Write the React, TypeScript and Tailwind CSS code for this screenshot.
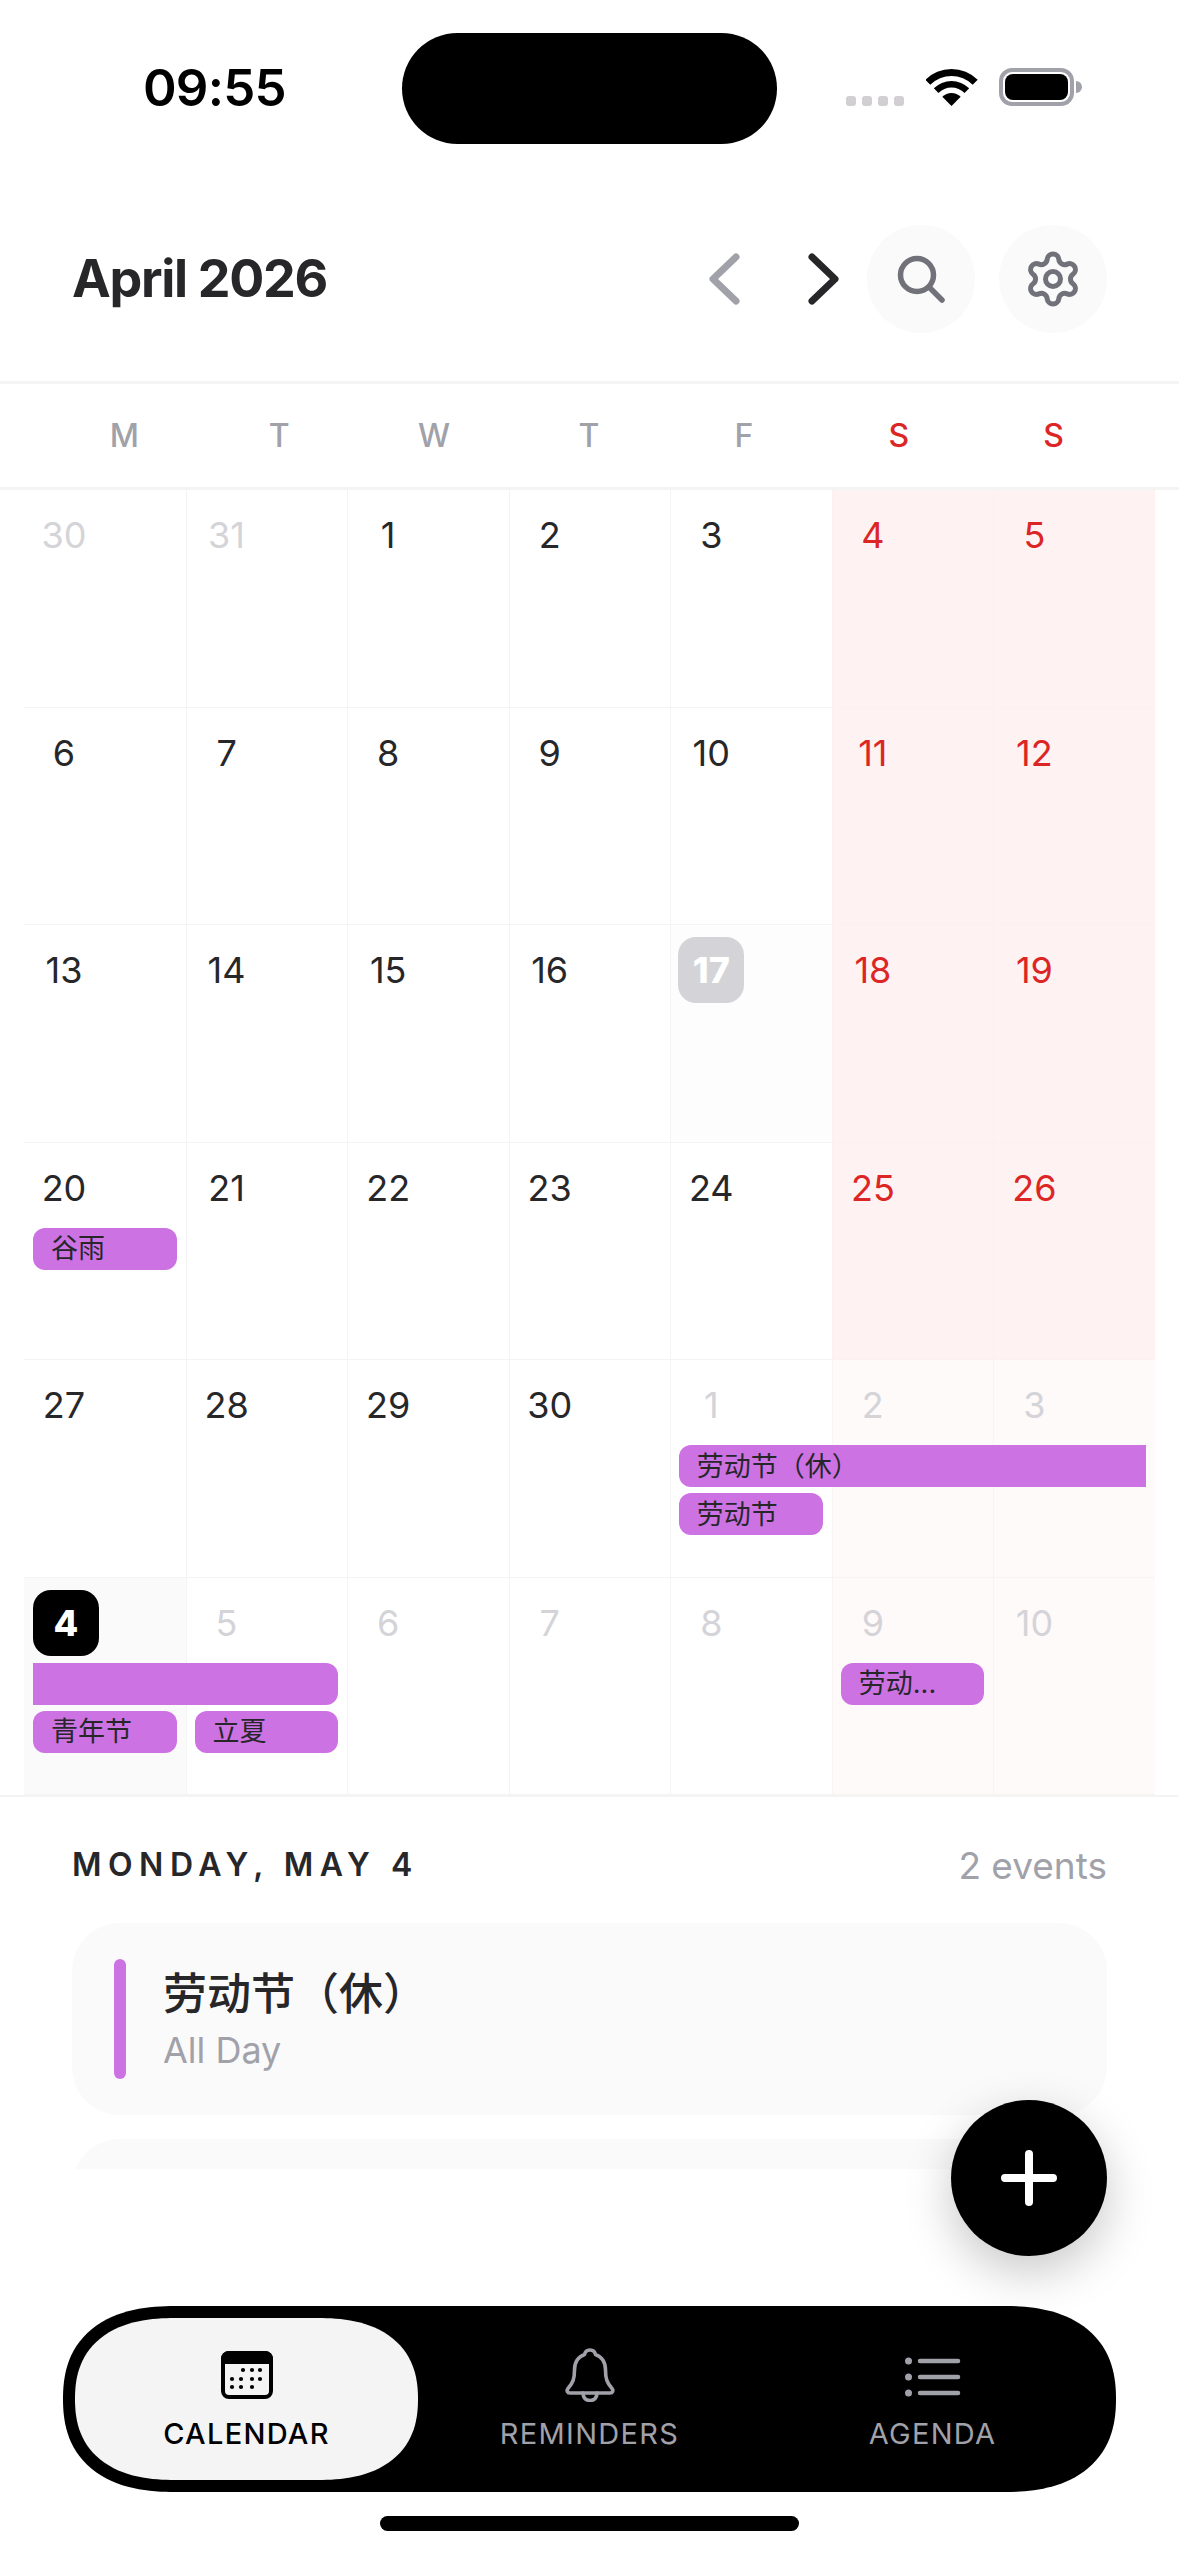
import React from "react";
import { Settings } from "lucide-react";

type Ev = { text?: string; cls: string };
type Cell = { d: number; kind: "in" | "out" | "wkn" | "wko" | "sel17" | "sel4" };

const sans = "[font-family:Inter,'Noto_Sans_CJK_SC',sans-serif]";

const mk = (nums: number[], outs: number[] = []): Cell[] =>
  nums.map((d, i) => {
    const out = outs.includes(i);
    const we = i >= 5;
    return { d, kind: we ? (out ? "wko" : "wkn") : out ? "out" : "in" };
  });

const weeks: { cells: Cell[]; events: Ev[] }[] = [
  { cells: mk([30, 31, 1, 2, 3, 4, 5], [0, 1]), events: [] },
  { cells: mk([6, 7, 8, 9, 10, 11, 12]), events: [] },
  {
    cells: mk([13, 14, 15, 16, 17, 18, 19]).map((c) => (c.d === 17 ? { ...c, kind: "sel17" as const } : c)),
    events: [],
  },
  {
    cells: mk([20, 21, 22, 23, 24, 25, 26]),
    events: [{ text: "谷雨", cls: "col-start-1 col-span-1 row-start-2 ml-[9px] mr-[9px] rounded-[12px]" }],
  },
  {
    cells: mk([27, 28, 29, 30, 1, 2, 3], [4, 5, 6]),
    events: [
      { text: "劳动节（休）", cls: "col-start-5 col-span-3 row-start-2 ml-[8.5px] mr-[9px] rounded-l-[12px]" },
      { text: "劳动节", cls: "col-start-5 col-span-1 row-start-3 ml-[8.5px] mr-[9px] rounded-[12px]" },
    ],
  },
  {
    cells: mk([4, 5, 6, 7, 8, 9, 10], [1, 2, 3, 4, 5, 6]).map((c, i) => (i === 0 ? { ...c, kind: "sel4" as const } : c)),
    events: [
      { cls: "col-start-1 col-span-2 row-start-2 ml-[9px] mr-[9px] rounded-r-[12px]" },
      { text: "青年节", cls: "col-start-1 col-span-1 row-start-3 ml-[9px] mr-[9px] rounded-[12px]" },
      { text: "立夏", cls: "col-start-2 col-span-1 row-start-3 ml-[9px] mr-[9px] rounded-[12px]" },
      { text: "劳动...", cls: "col-start-6 col-span-1 row-start-2 ml-[9px] mr-[9px] rounded-[12px]" },
    ],
  },
];

const cellBg: Record<Cell["kind"], string> = {
  in: "bg-white border-[#f4f4f5]",
  out: "bg-white border-[#f4f4f5]",
  wkn: "bg-[#fef2f2] border-[#fcf0f0]",
  wko: "bg-[#fefafa] border-[#f8f4f4]",
  sel17: "bg-[#fdfdfd] border-[#f4f4f5]",
  sel4: "bg-[#fafafa] border-[#f4f4f5]",
};
const numCls: Record<Cell["kind"], string> = {
  in: "text-[#27272a]",
  out: "text-[#d4d4d8]",
  wkn: "text-[#dc2626]",
  wko: "text-[#d4d4d8]",
  sel17: "bg-[#d4d4d8] text-white font-extrabold",
  sel4: "bg-black text-white font-extrabold",
};

function DayCell({ cell, col, first }: { cell: Cell; col: string; first: boolean }) {
  const edge = first ? (cell.kind === "sel4" ? "pl-[9px]" : "pl-[7px]") : "border-l pl-[7px]";
  return (
    <div className={`${col} row-start-1 row-span-4 border-b pt-[12px] ${edge} ${cellBg[cell.kind]}`}>
      <div className={`w-[66px] h-[66px] rounded-[18px] flex items-center justify-center text-[36px] leading-none ${numCls[cell.kind]}`}>
        {cell.d}
      </div>
    </div>
  );
}

const cols = [
  "col-start-1",
  "col-start-2",
  "col-start-3",
  "col-start-4",
  "col-start-5",
  "col-start-6",
  "col-start-7",
];

function CalendarIcon() {
  const dots: [number, number][] = [
    [22, 19],[31, 19],[39, 19],
    [11, 28],[20, 28],[31, 28],[39, 28],
    [11, 36],[20, 36],[31, 36],
  ];
  return (
    <svg width="52" height="48" viewBox="0 0 52 48" className="shrink-0">
      <rect x="2" y="2" width="48" height="44" rx="6" fill="none" stroke="#000" strokeWidth="4" />
      <path d="M0 8a8 8 0 0 1 8-8h36a8 8 0 0 1 8 8v5H0z" fill="#000" />
      {dots.map(([x, y], i) => (
        <circle key={i} cx={x} cy={y} r="2.1" fill="#000" />
      ))}
    </svg>
  );
}

function BellIcon() {
  return (
    <svg width="52" height="54" viewBox="0 0 52 54" fill="none" stroke="#a1a1aa" strokeWidth="3.6" strokeLinejoin="round" strokeLinecap="round" className="shrink-0">
      <path d="M26 2c-3 0-5 2-5.5 4.6C13.500 9 10.500 15 10.500 22c0 8.500-1.500 13-6.500 18.500-1.700 2-.8 4.500 2 4.500h40c2.800 0 3.700-2.500 2-4.500-5-5.500-6.500-10-6.500-18.500 0-7-3-13-10-15.400C31 4 29 2 26 2z" />
      <path d="M19 45c0 5 3 7.500 7 7.500s7-2.500 7-7.500" />
    </svg>
  );
}

function ListIcon() {
  return (
    <svg width="56" height="40" viewBox="0 0 56 40" fill="none" className="shrink-0">
      {[4, 20, 36].map((y) => (
        <g key={y}>
          <circle cx="3.500" cy={y} r="3.500" fill="#a1a1aa" />
          <line x1="15" x2="53" y1={y} y2={y} stroke="#a1a1aa" strokeWidth="4.500" strokeLinecap="round" />
        </g>
      ))}
    </svg>
  );
}

export default function App() {
  return (
    <div className={`relative w-[1179px] h-[2556px] overflow-hidden bg-white flex flex-col ${sans}`}>
      {/* status bar */}
      <div className="h-[177px] pt-[33px] flex items-start shrink-0">
        <div className="ml-[143px] w-[259px] h-[109px] flex items-center text-[51px] font-semibold text-black leading-none tracking-[-0.8px]">
          09:55
        </div>
        <div className="w-[375px] h-[111px] rounded-[56px] bg-black" />
        <div className="ml-[69px] h-[111px] pt-[35px] flex items-end pb-[38px]">
          <div className="flex gap-[6px] items-end pb-0">
            {[0, 1, 2, 3].map((i) => (
              <div key={i} className="w-[10px] h-[10px] rounded-[3px] bg-[#d1cfd1]" />
            ))}
          </div>
          <svg width="52" height="37" viewBox="0 0 52 37" className="ml-[22px]" fill="#000">
            <path d="M-.66 10.840A37 37 0 0 1 51.660 10.840L46.700 15.800A30 30 0 0 0 4.300 15.800Z" />
            <path d="M7.820 19.320A25 25 0 0 1 43.180 19.320L38.580 23.920A18.500 18.500 0 0 0 12.420 23.920Z" />
            <path d="M16.310 27.810A13 13 0 0 1 34.690 27.810L25.500 37Z" />
          </svg>
          <div className="ml-[21px] flex items-center">
            <div className="w-[75px] h-[38px] rounded-[13px] border-[4px] border-[#a1a1aa] p-[2px]">
              <div className="w-full h-full rounded-[8px] bg-black" />
            </div>
            <div className="w-[6px] h-[12px] ml-[2px] rounded-r-[6px] bg-[#a1a1aa]" />
          </div>
        </div>
      </div>

      {/* header */}
      <div className="h-[207px] shrink-0 pt-[48px] pl-[72px] pr-[72px] border-b-[3px] border-[#f4f4f5] flex items-start">
        <div className="h-[108px] flex items-center text-[52px] font-bold text-[#27272a] tracking-[-1.3px] leading-none">
          April 2026
        </div>
        <div className="ml-auto h-[108px] flex items-center">
          <svg width="36" height="58" viewBox="0 0 36 58" fill="none" stroke="#a1a1aa" strokeWidth="7" strokeLinecap="round" strokeLinejoin="round">
            <path d="M30 7 7 29l23 22" />
          </svg>
          <svg width="36" height="58" viewBox="0 0 36 58" fill="none" stroke="#27272a" strokeWidth="7" strokeLinecap="round" strokeLinejoin="round" className="ml-[64px]">
            <path d="M6 7l23 22L6 51" />
          </svg>
          <div className="ml-[25px] w-[108px] h-[108px] rounded-full bg-[#fafafa] flex items-center justify-center">
            <svg width="50" height="50" viewBox="0 0 50 50" fill="none" stroke="#71717a" strokeWidth="5.5" strokeLinecap="round">
              <circle cx="21" cy="21" r="16.500" />
              <path d="M34 34l12 12" />
            </svg>
          </div>
          <div className="ml-[24px] w-[108px] h-[108px] rounded-full bg-[#fafafa] flex items-center justify-center">
            <Settings size={60} color="#71717a" strokeWidth={2} />
          </div>
        </div>
      </div>

      {/* weekdays */}
      <div className="h-[106px] shrink-0 pl-[47px] pr-[48px] border-b-[3px] border-[#f4f4f5] grid grid-cols-7 items-center text-[32px] font-medium text-center text-[#a1a1aa]">
        <div>M</div>
        <div>T</div>
        <div>W</div>
        <div>T</div>
        <div>F</div>
        <div className="text-[#dc2626]">S</div>
        <div className="text-[#dc2626]">S</div>
      </div>

      {/* calendar grid */}
      <div className="shrink-0 pl-[24px] pr-[24px] border-b-[2px] border-[#f4f4f5]">
        {weeks.map((w, wi) => (
          <div key={wi} className="h-[217.5px] grid grid-cols-7 grid-rows-[79px_42px_42px_1fr] gap-y-[6px]">
            {w.cells.map((c, i) => (
              <DayCell key={i} cell={c} col={cols[i]} first={i === 0} />
            ))}
            {w.events.map((e, i) => (
              <div key={i} className={`${e.cls} h-[42px] bg-[#cd72e3] pl-[18px] flex items-center text-[27px] leading-none text-[#27272a] whitespace-nowrap overflow-hidden`}>
                {e.text}
              </div>
            ))}
          </div>
        ))}
      </div>

      {/* day panel */}
      <div className="h-[372px] shrink-0 overflow-hidden px-[72px] pt-[46px]">
        <div className="flex items-center justify-between h-[44px]">
          <div className="text-[32px] font-semibold text-[#27272a] tracking-[6.5px] leading-none">MONDAY, MAY 4</div>
          <div className="text-[37px] text-[#a1a1aa] leading-none">2 events</div>
        </div>
        <div className="mt-[36px] h-[192px] rounded-[48px] bg-[#fafafa] flex items-center pl-[42px]">
          <div className="w-[12px] h-[120px] rounded-full bg-[#cd72e3]" />
          <div className="ml-[37px] flex flex-col">
            <div className="text-[44px] font-medium text-[#27272a] leading-[60px] -mt-[2px]">劳动节（休）</div>
            <div className="text-[36px] text-[#a1a1aa] leading-[46px] mt-[3px]">All Day</div>
          </div>
        </div>
        <div className="mt-[24px] h-[192px] rounded-[48px] bg-[#fafafa]" />
      </div>

      {/* tab bar */}
      <div className="ml-[63px] mt-[137px] w-[1053px] h-[186px] shrink-0 rounded-[112px/93px] [corner-shape:superellipse(1.25)] bg-black p-[12px] grid grid-cols-3">
        <div className="rounded-[100px/81px] [corner-shape:superellipse(1.25)] bg-[#f4f4f5] flex flex-col items-center pt-[33px]">
          <CalendarIcon />
          <div className="mt-[17px] text-[29px] font-medium text-black leading-[36px] tracking-[1.3px]">CALENDAR</div>
        </div>
        <div className="flex flex-col items-center pt-[30px]">
          <BellIcon />
          <div className="mt-[14px] text-[29px] text-[#a1a1aa] leading-[36px] tracking-[1.3px]">REMINDERS</div>
        </div>
        <div className="flex flex-col items-center pt-[39px]">
          <ListIcon />
          <div className="mt-[19px] text-[29px] text-[#a1a1aa] leading-[36px] tracking-[1.3px]">AGENDA</div>
        </div>
      </div>

      {/* home indicator */}
      <div className="mt-[24px] mx-auto w-[419px] h-[15px] rounded-full bg-black shrink-0" />

      {/* FAB */}
      <div className="absolute left-[951px] top-[2100px] w-[156px] h-[156px] rounded-full bg-black shadow-[0_16px_48px_rgba(0,0,0,0.22)] flex items-center justify-center">
        <svg width="56" height="56" viewBox="0 0 56 56" stroke="#fff" strokeWidth="8" strokeLinecap="round">
          <path d="M28 4v48M4 28h48" />
        </svg>
      </div>
    </div>
  );
}
